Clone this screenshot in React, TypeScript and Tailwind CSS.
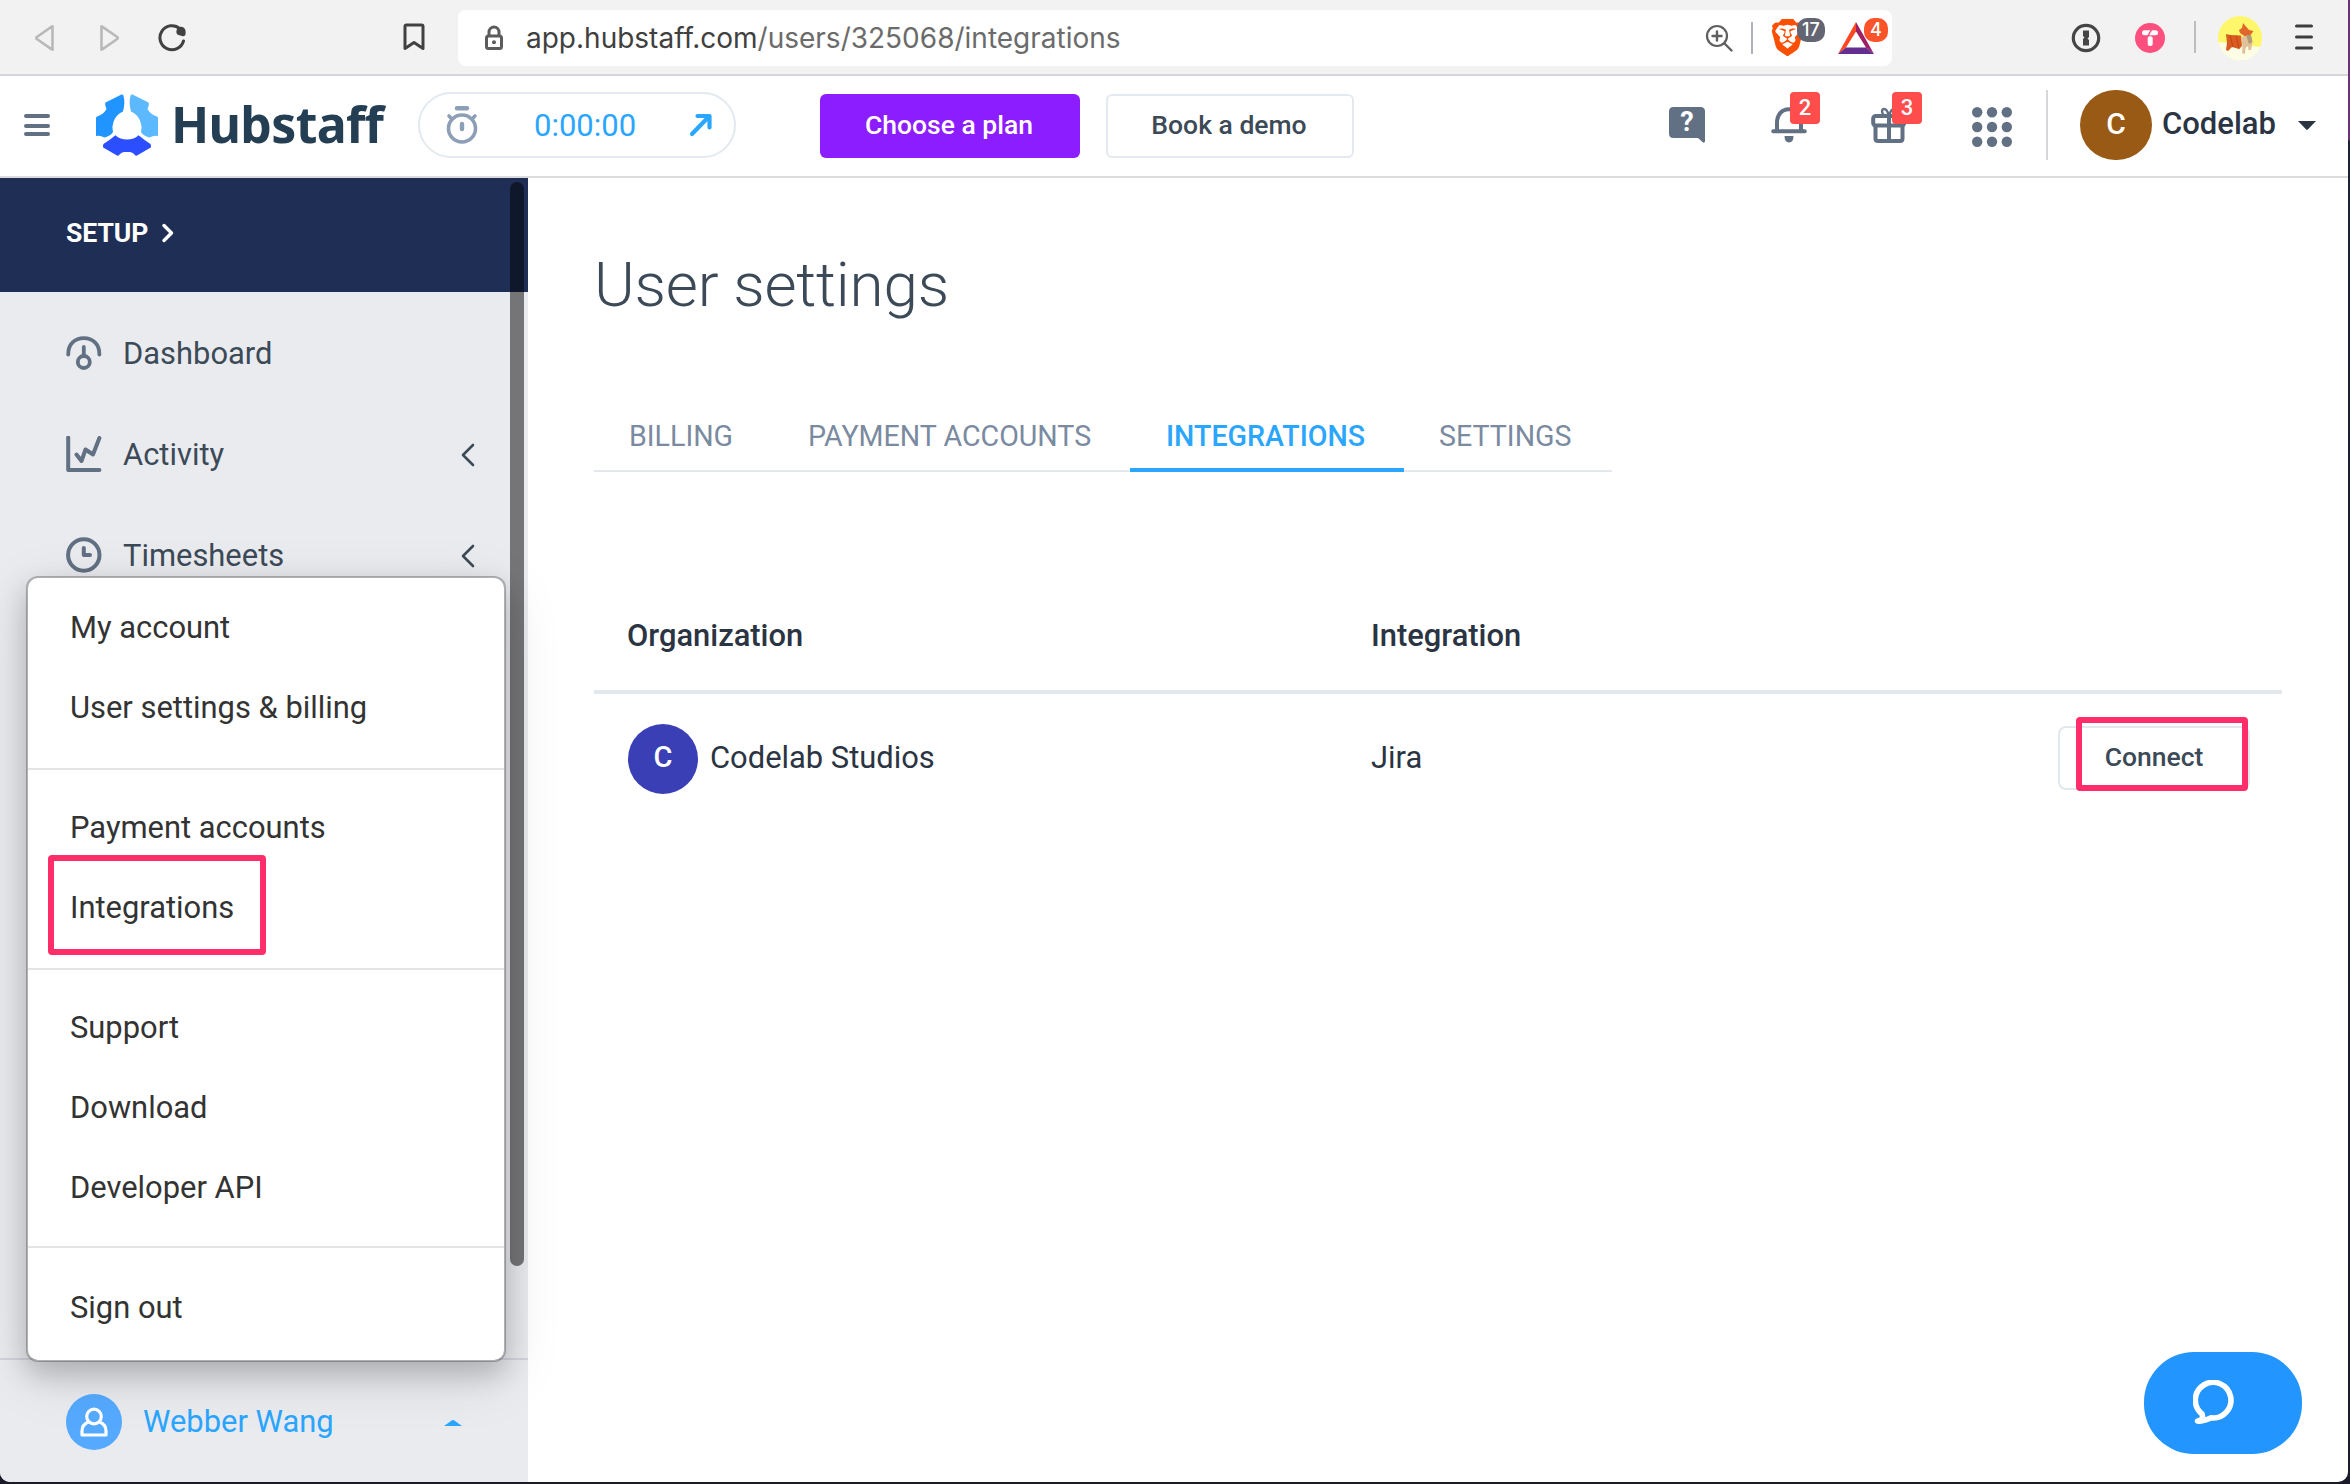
import React from "react";
import { SiBrave } from "react-icons/si";

function BrowserBar() {
  return (
    <div className="flex h-[76px] shrink-0 items-center border-b-2 border-[#d4d6db] bg-[#f2f2f2] text-[#414141]">
      <svg className="ml-[34px] mt-0.5 h-[28px] w-[22px] text-[#b9b9b9]" viewBox="0 0 22 28" fill="none" stroke="currentColor" strokeWidth="2.6" strokeLinejoin="round">
        <path d="M18.5 3.2 Q19 2 17.8 2.6 L2.8 13 Q1.8 14 2.8 15 L17.8 25.4 Q19 26 18.5 24.8Z" />
      </svg>
      <svg className="ml-[42px] mt-0.5 h-[28px] w-[22px] text-[#b9b9b9]" viewBox="0 0 22 28" fill="none" stroke="currentColor" strokeWidth="2.6" strokeLinejoin="round">
        <path d="M3.5 3.2 Q3 2 4.2 2.6 L19.2 13 Q20.2 14 19.2 15 L4.2 25.4 Q3 26 3.5 24.8Z" />
      </svg>
      <svg className="ml-[38px] mt-0.5 h-[28px] w-[30px]" viewBox="0 0 30 28" fill="none">
        <path d="M22 4.800 A12 12 0 1 0 25.500 17" stroke="currentColor" strokeWidth="3" strokeLinecap="round" />
        <path d="M18.500 9 C18 5 20.500 2 24 3 C27.500 3.500 28 7 27.500 10.500 C27 12 25.500 12.500 24 12 C21.500 11.500 19 11 18.500 9Z" fill="currentColor" />
      </svg>
      <svg className="ml-[215px] h-[28px] w-[22px]" viewBox="0 0 22 28" fill="none" stroke="currentColor" strokeWidth="3" strokeLinejoin="round">
        <path d="M2 3.500 Q2 2 3.500 2 H18.500 Q20 2 20 3.500 V25.500 L11 19.500 L2 25.500Z" />
      </svg>
      <div className="ml-[33px] mt-0.5 flex h-[56px] w-[1434px] items-center rounded-lg bg-white">
        <svg className="ml-[26px] h-[26px] w-5 text-[#5c5c5c]" viewBox="0 0 20 26" fill="none" stroke="currentColor" strokeWidth="3">
          <rect x="2.500" y="11" width="15" height="12.500" rx="2" />
          <path d="M5 11 V7 A5 5 0 0 1 15 7 V11" />
          <circle cx="10" cy="17.200" r="2" fill="currentColor" stroke="none" />
        </svg>
        <div className="ml-[22px] font-['Inter'] text-[28px] leading-none text-[#6b6b6b]">
          <span className="text-[#404040]">app.hubstaff.com</span>/users/325068/integrations
        </div>
        <svg className="ml-auto h-7 w-7 text-[#5f5f5f]" viewBox="0 0 28 28" fill="none" stroke="currentColor" strokeWidth="2.200" strokeLinecap="round">
          <circle cx="12" cy="12" r="10" />
          <path d="M19.500 19.500 L26.500 26.500 M7.500 12 H16.500 M12 7.500 V16.500" strokeWidth="2.400" />
        </svg>
        <div className="ml-[18px] h-8 w-0.5 bg-[#b0b4ba]" />
        <div className="relative ml-5 h-[38px] w-[52px]">
          <SiBrave className="absolute -left-[4px] top-0 h-[37px] w-[37px] text-[#fb4f04]" />
          <div className="absolute -top-px left-6 flex h-6 w-7 items-center justify-center rounded-[10px] bg-[#636672] font-['Inter'] text-[18px] font-medium leading-none text-white">17</div>
        </div>
        <div className="relative ml-[13px] mr-[4px] h-[38px] w-[50px]">
          <svg className="absolute left-0 top-[3px] h-8 w-9" viewBox="0 0 36 32">
            <path d="M18 0 L18 9.500 L8 25.500 L0 32Z" fill="#ff4724" />
            <path d="M18 0 L36 32 L28 25.500 L18 9.500Z" fill="#9e1f63" />
            <path d="M0 32 L8 25.500 H28 L36 32Z" fill="#662d91" />
          </svg>
          <div className="absolute -top-px left-[26px] flex size-6 items-center justify-center rounded-[10px] bg-[#fb542b] font-['Inter'] text-[18px] font-medium leading-none text-white">4</div>
        </div>
      </div>
      <svg className="ml-[179px] mt-0.5 h-[30px] w-[30px]" viewBox="0 0 30 30" fill="none">
        <circle cx="15" cy="15" r="12.700" stroke="#454545" strokeWidth="3.200" />
        <path d="M12 7.500 H18 V14 L16.500 15.500 L18 17 V22.500 H12 V16 L13.500 14.500 L12 13Z" fill="#454545" />
      </svg>
      <svg className="ml-[34px] mt-0.5 h-[30px] w-[30px]" viewBox="0 0 30 30">
        <circle cx="15" cy="15" r="15" fill="#ff4f7e" />
        <path d="M9.500 7.300 H15.300 L12.500 12.300 H9.500 A2.500 2.500 0 0 1 9.500 7.300Z" fill="#fff" />
        <path d="M17 7.300 H20.500 A2.500 2.500 0 0 1 20.500 12.300 H14.200Z" fill="#fff" />
        <rect x="12.700" y="13.300" width="5" height="9.700" rx="2" fill="#fff" />
      </svg>
      <div className="ml-[29px] h-8 w-0.5 bg-[#bdbdbd]" />
      <svg className="ml-[22px] mt-0.5 h-11 w-11" viewBox="0 0 44 44">
        <circle cx="22" cy="22" r="22" fill="#fff76b" />
        <path d="M0.500 26 L42.500 31 A22 22 0 0 1 0.500 26Z" fill="#fdfde6" />
        <path d="M8 18 L12 19 L23 19.500 L24 30 L21 33 L14 31 L10 35 L8 34 L9 27Z" fill="#d95b22" />
        <path d="M22 17 L21 14 L24 12 L25 7 L27.500 10 L31 14 L35.500 15 L33 18.500 L27 20.500Z" fill="#e0662b" />
        <path d="M23 21 L28 20 L33 19 L34.500 26 L33 34 L30.500 34 L30 30 L27.500 32 L27 38 L24 37 L24.500 30Z" fill="#dfc29a" />
        <path d="M28 19 L33 19 L34.500 26 L31 28Z" fill="#b59a78" />
        <path d="M12 19 L15 31 M18 19.500 L21 33" stroke="#b8430f" strokeWidth="0.800" />
      </svg>
      <svg className="ml-[32px] h-[26px] w-5" viewBox="0 0 20 26" stroke="#3d3d3d" strokeWidth="3" strokeLinecap="round">
        <path d="M2.500 2 H17.500 M2.500 13 H17.500 M2.500 24 H17.500" />
      </svg>
    </div>
  );
}

const LOGO_SIDE =
  "M25.500 0.500 L9.500 8.500 Q8.500 10 10.500 15 Q7.500 20.500 1 22.500 Q0 23 0 24 V42 Q4 41 8.500 43.500 Q15 41.500 17 38 Q15.500 33 17.500 28 Q20 20.500 27 17.500 Q29.500 8 27.400 1.500 Q27 0 25.500 0.500Z";

function Badge({ children }: { children: React.ReactNode }) {
  return (
    <div className="absolute -top-[15px] flex h-8 w-[30px] items-center justify-center rounded bg-[#ff4c4c] text-[22px] font-medium leading-none text-white">
      {children}
    </div>
  );
}

function Header() {
  return (
    <header className="flex h-[102px] shrink-0 items-center border-b-2 border-[#dcdcdc] bg-white pb-0.5">
      <svg className="ml-6 h-[22px] w-[26px]" viewBox="0 0 26 22" stroke="#627084" strokeWidth="4" strokeLinecap="round">
        <path d="M2 2 H24 M2 12 H24 M2 20 H24" />
      </svg>
      <svg className="ml-[46px] h-[62px] w-[62px]" viewBox="0 0 62 62">
        <path d={LOGO_SIDE} fill="#2095ff" />
        <path d={LOGO_SIDE} fill="#5cb8ff" transform="translate(62 0) scale(-1 1)" />
        <path d="M19.500 41.200 Q13 46.500 7.500 50 Q6.500 51.500 7.200 53.500 L21 61.600 Q22.500 62 23.500 60.500 Q25.500 58 28 58 H34 Q36.500 58 38.500 60.500 Q39.500 62 41 61.600 L54.800 53.500 Q55.500 51.500 54.500 50 Q49 46.500 42.500 41.200 Q38 45.500 31 45.500 Q24 45.500 19.500 41.200Z" fill="#2b4fff" />
      </svg>
      <div className="-mt-0.5 ml-[13px] w-[220px] font-['Noto_Sans'] text-[50px] font-bold leading-none tracking-[-0.7px] text-[#243f54]">Hubstaff</div>
      <div className="ml-[27px] flex h-[66px] w-[318px] items-center rounded-[33px] border-2 border-[#e3e9f0]">
        <svg className="ml-[26px] h-[39px] w-8" viewBox="0 0 32 39" fill="none" stroke="#8d9fb6" strokeLinecap="round">
          <circle cx="16" cy="22.500" r="13.500" strokeWidth="3.600" />
          <path d="M11 2.300 H21" strokeWidth="4.400" />
          <path d="M16 18 V23" strokeWidth="4.400" />
          <path d="M3 10 L5.500 12.500 M29 10 L26.500 12.500" strokeWidth="3.600" />
        </svg>
        <div className="ml-[56px] w-[102px] text-[31px] leading-none text-[#2aa6ff]">0:00:00</div>
        <svg className="ml-[53px] h-6 w-6" viewBox="0 0 24 24" fill="none" stroke="#2aa6ff" strokeWidth="4.200" strokeLinecap="round" strokeLinejoin="round">
          <path d="M3 21 L20 3.500 M8.500 3 H20.500 V14.500" />
        </svg>
      </div>
      <button className="ml-[84px] mt-0.5 h-16 w-[260px] rounded-md bg-[#8c1dff] pb-0.5 pr-0.5 text-[26.500px] font-medium leading-none text-white">Choose a plan</button>
      <button className="ml-[26px] mt-0.5 h-16 w-[248px] rounded-md border-2 border-[#e3e9f0] pb-0.5 pr-0.5 text-[26.500px] font-medium leading-none text-[#3c4a57]">Book a demo</button>

      <div className="relative ml-[315px] h-9 w-9">
        <svg className="absolute inset-0 h-9 w-9" viewBox="0 0 36 36">
          <path d="M4.500 0 H31.500 Q36 0 36 4.500 V34.500 Q35.500 36 34 35.500 L29 31 H4.500 Q0 31 0 26.500 V4.500 Q0 0 4.500 0Z" fill="#627084" />
        </svg>
        <div className="absolute inset-x-0 top-[2px] text-center text-[27px] font-bold leading-none text-white">?</div>
      </div>
      <div className="relative ml-[66px] flex h-9 w-[36px] justify-end">
        <svg className="absolute inset-0 h-9 w-9" viewBox="0 0 36 36">
          <path d="M2.200 24.200 H33.800 M6 24 V16 C6 8 10.500 2.200 18 2.200 C25.500 2.200 30 8 30 16 V24" fill="none" stroke="#627084" strokeWidth="4" strokeLinecap="round" />
          <path d="M13.500 29 H22.500 Q22.500 35.500 18 35.500 Q13.500 35.500 13.500 29Z" fill="#627084" />
        </svg>
        <div className="relative left-[13px] w-[30px]"><Badge>2</Badge></div>
      </div>
      <div className="relative ml-[64px] flex h-9 w-[36px] justify-end">
        <svg className="absolute inset-0 h-9 w-9" viewBox="0 0 36 36" fill="none" stroke="#627084" strokeWidth="4">
          <rect x="2.200" y="9" width="31" height="9.500" rx="2.500" />
          <path d="M4.500 18.500 V31.500 Q4.500 34 7 34 H29 Q31.500 34 31.500 31.500 V18.500 M18 9 V34" />
          <path d="M17.500 8 Q16 1.500 12.500 2 Q9.500 3 12.500 8 M18.500 8 Q20 1.500 23.500 2 Q26.500 3 23.500 8" strokeWidth="2.400" />
        </svg>
        <div className="relative left-[15px] w-[30px]"><Badge>3</Badge></div>
      </div>
      <svg className="ml-[65px] mt-[4px] h-10 w-10" viewBox="0 0 40 40" fill="#627084">
        {[5.200, 20, 34.800].map((y) => [5.200, 20, 34.800].map((x) => <circle key={`${x}-${y}`} cx={x} cy={y} r="5.200" />))}
      </svg>
      <div className="ml-[34px] h-[70px] w-0.5 bg-[#d5d7da]" />
      <div className="ml-8 flex h-[70px] w-[72px] items-center justify-center rounded-full bg-[#995a15] pb-[3px] text-[30px] font-medium leading-none text-white">C</div>
      <div className="-mt-[3px] ml-[10px] w-[118px] text-[31px] font-medium leading-none text-[#2b3442]">Codelab</div>
      <svg className="ml-[18px] mt-px h-[9px] w-[18px]" viewBox="0 0 18 9" fill="#2b3442">
        <path d="M0 0 H18 L9.800 8.500 Q9 9 8.200 8.500Z" />
      </svg>
    </header>
  );
}

function NavItem({ icon, label, arrow }: { icon: React.ReactNode; label: string; arrow?: boolean }) {
  return (
    <div className="flex h-[101px] items-center pl-[66px] text-[#3c4a57]">
      <svg className="h-9 w-9" viewBox="0 0 36 36" fill="none" stroke="#627084" strokeWidth="4" strokeLinecap="round" strokeLinejoin="round">{icon}</svg>
      <div className="ml-[21px] pt-1 text-[30.900px] leading-none">{label}</div>
      {arrow && (
        <svg className="ml-auto mr-[52px] mt-[3px] h-6 w-[16px]" viewBox="0 0 16 24" fill="none" stroke="currentColor" strokeWidth="2.600" strokeLinecap="round" strokeLinejoin="round">
          <path d="M13 2 L3 12 L13 22" />
        </svg>
      )}
    </div>
  );
}

const MENU = [
  { items: ["My account", "User settings & billing"], spacing: "" },
  { items: ["Payment accounts", "Integrations"], spacing: "mt-5 border-t-2 border-[#e4e4e4] pt-[18px]" },
  { items: ["Support", "Download", "Developer API"], spacing: "mt-5 border-t-2 border-[#e4e4e4] pt-[18px]" },
  { items: ["Sign out"], spacing: "mt-[18px] border-t-2 border-[#e4e4e4] pt-5" },
];

function AccountMenu() {
  return (
    <div className="absolute left-[26px] top-[398px] h-[786px] w-[480px] rounded-xl border-2 border-black/25 bg-white bg-clip-padding pt-[10px] shadow-[0_12px_28px_rgba(0,0,0,0.2),0_16px_60px_rgba(0,0,0,0.1)]">
      {MENU.map(({ items, spacing }) => (
        <div key={items[0]} className={spacing}>
          {items.map((label) => (
            <div key={label} className="relative flex h-20 items-center pl-[42px] text-[30.900px] leading-none text-[#333]">
              {label}
              {label === "Integrations" && <div className="absolute left-5 top-[-13px] h-[100px] w-[218px] rounded border-[6px] border-[#ff2e6b]" />}
            </div>
          ))}
        </div>
      ))}
    </div>
  );
}

function Sidebar() {
  return (
    <aside className="relative z-10 flex w-[528px] shrink-0 flex-col bg-[#eaebef]">
      <div className="flex h-[114px] items-center bg-[#1f2e55] pb-[4px] pl-[66px] text-white">
        <div className="w-[84px] text-[26.600px] font-bold leading-none tracking-[-0.1px]">SETUP</div>
        <svg className="ml-[10px] h-5 w-4" viewBox="0 0 16 20" fill="none" stroke="currentColor" strokeWidth="3.400" strokeLinecap="round" strokeLinejoin="round">
          <path d="M4 2.500 L11.500 10 L4 17.500" />
        </svg>
      </div>
      <nav className="mt-[10px] flex flex-col">
        <NavItem
          label="Dashboard"
          icon={<><path d="M2.200 19.500 C2 9 9 3.200 17.800 3.200 C26.600 3.200 33.600 9 33.400 19.500 M17.800 12 V20" strokeWidth="3.800" /><circle cx="17.800" cy="27" r="6" strokeWidth="3.800" /></>}
        />
        <NavItem arrow label="Activity" icon={<path d="M2.200 1.500 V34 H33.400 M10.500 18.500 L15.500 25 L19.500 13.500 L27 18.500 L33.400 2" />} />
        <NavItem arrow label="Timesheets" icon={<><circle cx="17.800" cy="18" r="15.700" /><path d="M17.800 11 V18 H24" /></>} />
      </nav>
      <div className="absolute right-1 top-1 h-[1084px] w-[14px] rounded-full bg-black/50" />
      <div className="mt-auto flex h-[124px] items-center border-t-2 border-[#d3d4de] pl-[66px] pt-0.5">
        <div className="flex size-14 items-center justify-center rounded-full bg-[#55aaff]">
          <svg className="h-[30px] w-7" viewBox="0 0 28 30" fill="none" stroke="#fff" strokeWidth="3.200" strokeLinejoin="round">
            <circle cx="14" cy="9.500" r="7.300" />
            <path d="M8.500 15 Q2 17.500 2 24 V28 H26 V24 Q26 17.500 19.500 15" />
          </svg>
        </div>
        <div className="ml-[21px] text-[30.900px] leading-none text-[#2aa6ff]">Webber Wang</div>
        <svg className="ml-auto mr-[66px] mt-px h-[6px] w-[18px]" viewBox="0 0 18 6" fill="#2aa6ff">
          <path d="M0 6 L8 0.300 Q9 -0.200 10 0.300 L18 6Z" />
        </svg>
      </div>
      <AccountMenu />
    </aside>
  );
}

function Main() {
  return (
    <main className="relative flex-1 pl-[66px]">
      <h1 className="mt-[72px] text-[62px] font-light leading-[70px] tracking-[-0.200px] text-[#3c4a57]">User settings</h1>
      <div className="mt-[50px] flex h-[102px] w-[1018px] border-b-2 border-[#e3e8ef] text-[28.600px] leading-none text-[#7a8aa0]">
        <div className="w-[178px] pl-[35px] pt-[52px]">BILLING</div>
        <div className="w-[358px] whitespace-nowrap pl-[36px] pt-[52px]">PAYMENT ACCOUNTS</div>
        <div className="h-[102px] w-[274px] border-b-4 border-[#2aa6ff] pl-[36px] pt-[52px] font-medium text-[#2aa6ff]">INTEGRATIONS</div>
        <div className="pl-[35px] pt-[52px]">SETTINGS</div>
      </div>
      <div className="mt-[128px] w-[1688px] text-[30.900px] leading-none text-[#2b3442]">
        <div className="grid h-[94px] grid-cols-[742px_1fr] items-start border-b-4 border-[#e3e8ef] pt-[21px] font-medium">
          <div className="pl-[33px]">Organization</div>
          <div className="pl-[35px]">Integration</div>
        </div>
        <div className="grid h-[128px] grid-cols-[742px_1fr_256px] items-center">
          <div className="flex items-center pl-[34px] pt-0.5">
            <div className="flex size-[70px] items-center justify-center rounded-full bg-[#3a3fb5] pb-[3px] text-[29px] font-medium text-white">C</div>
            <div className="ml-3 whitespace-nowrap pb-px">Codelab Studios</div>
          </div>
          <div className="pl-[35px] pt-px">Jira</div>
          <div className="relative ml-[32px] flex h-16 w-48 items-center justify-center rounded-lg border-2 border-[#e3e8ef] pb-0.5 text-[26.500px] font-medium text-[#3c4a57]">
            Connect
            <div className="absolute left-4 top-[-11px] h-[74px] w-[172px] rounded border-[6px] border-[#ff2e6b]" />
          </div>
        </div>
      </div>
      <button className="absolute bottom-7 right-[46px] h-[102px] w-[158px] rounded-[50px] bg-[#2395ff]">
        <svg className="absolute left-[49px] top-[28px] h-[46px] w-[44px]" viewBox="0 0 44 46" fill="none" stroke="#fff" strokeWidth="5.600" strokeLinecap="round" strokeLinejoin="round">
          <path d="M4.500 41 C9 40.500 10.500 38 9 34 A17.800 17.800 0 1 1 18 37.800 C13 40 9 42 4.500 41Z" />
        </svg>
      </button>
    </main>
  );
}

export default function App() {
  return (
    <div className="h-[1484px] w-[2350px] overflow-hidden bg-[linear-gradient(#6b3076_0,#6b3076_140px,#1b2233_141px,#1a1a2a_100%)] font-['Roboto',sans-serif]">
      <div className="flex h-[1482px] w-[2348px] flex-col overflow-hidden rounded-b-[10px] bg-white">
        <BrowserBar />
        <Header />
        <div className="flex min-h-0 flex-1">
          <Sidebar />
          <Main />
        </div>
      </div>
    </div>
  );
}
